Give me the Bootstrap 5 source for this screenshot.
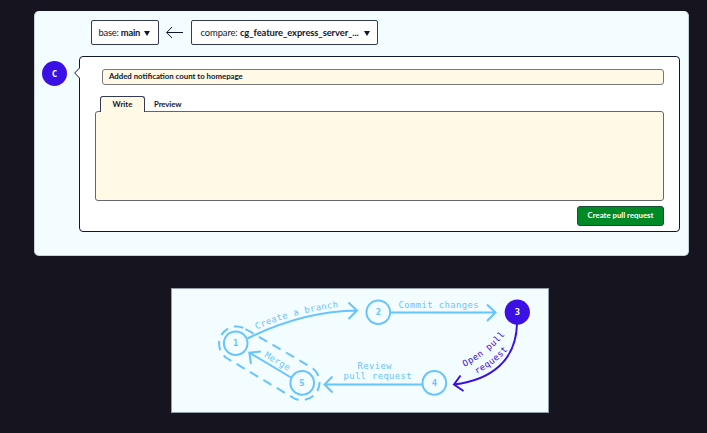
<!DOCTYPE html>
<html lang="en">
<head>
<meta charset="utf-8">
<meta name="viewport" content="width=device-width, initial-scale=1">
<title>Create pull request</title>
<link href="https://cdn.jsdelivr.net/npm/bootstrap@5.3.0/dist/css/bootstrap.min.css" rel="stylesheet">
<style>
:root{--ink:#10162f;--violet:#3a10e5;--cream:#fff9e5;--ice:#f3fcff}
body{background:#15141f;color:var(--ink);font-family:Lato,sans-serif;height:433px;overflow:hidden;padding:11px 18px 0 34px;line-height:1}
.pr-panel{height:245px;background:var(--ice);border:1px solid #c5d0d9;border-top:0;border-radius:5px;padding:9px 8px 0 7px}
.branch-bar{margin-left:49px;height:25px}
.branch-btn{height:25px;background:#fff;border:1px solid #343a54;border-radius:2px;font-size:9.4px;letter-spacing:-.23px;white-space:nowrap;color:var(--ink)}
.branch-btn svg{margin-top:1px}
.base-btn{width:68px;padding:0 8px 0 6.5px}
.compare-btn{width:187px;padding:0 7px 0 8.5px;letter-spacing:-.09px}
.left-arrow{margin:0 8px 0 7px}
.avatar-dot{width:25px;height:25px;background:var(--violet);color:#fff;font:700 9px "DejaVu Sans Mono",monospace;margin-top:5px}
.form-row{margin-top:11px;gap:7px}
.notch{width:6px;height:12px;margin:11px -1px 0 0;z-index:1}
.pr-box{height:175.5px;background:#fff;border:1px solid var(--ink);border-radius:4px;padding:12px 15px 0;font-size:7.8px;font-weight:700}
.title-field{height:16px;margin-left:7px;background:var(--cream);border:1px solid #77777c;border-radius:3px;padding:0 6px}
.tab-row{margin:11px 0 -1px 5px;height:16px}
.tab-on{width:45px;background:var(--cream);border:1px solid #343a54;border-bottom:0;border-radius:3px 3px 0 0;z-index:1}
.tab-off{margin-left:9px;padding-top:1px;letter-spacing:-.1px}
.body-field{height:90px;background:var(--cream);border:1px solid #65656c;border-radius:3px}
.create-btn{width:87px;height:20px;margin-top:5px;background:#008a27;border:1px solid #164c32;border-radius:3px;color:#fff;font-size:7.8px;font-weight:700;white-space:nowrap}
.flow-card{width:378px;height:125px;margin:32px 0 0 137px;background:var(--ice)}
.flow-card text{font-family:"DejaVu Sans Mono","Liberation Mono",monospace;font-size:8.8px}
</style>
</head>
<body>
<main>
<section class="pr-panel">
  <div class="branch-bar d-flex align-items-center">
    <button class="branch-btn base-btn d-flex align-items-center justify-content-between"><span>base: <b>main</b></span><svg width="6" height="5"><path d="M0 0H6L3 5Z" fill="#10162f"/></svg></button>
    <svg class="left-arrow" width="17" height="13" fill="none" stroke="#10162f" stroke-width="1"><path d="M17 6.5H.7M6 1L.7 6.5L6 12"/></svg>
    <button class="branch-btn compare-btn d-flex align-items-center justify-content-between"><span>compare: <b>cg_feature_express_server_...</b></span><svg width="6" height="5"><path d="M0 0H6L3 5Z" fill="#10162f"/></svg></button>
  </div>
  <div class="form-row d-flex align-items-start">
    <div class="avatar-dot rounded-circle d-flex align-items-center justify-content-center flex-shrink-0">C</div>
    <div class="d-flex flex-grow-1 align-items-start">
      <svg class="notch flex-shrink-0" viewBox="0 0 6 12"><path d="M6 .5L.7 6L6 11.5" fill="#fff" stroke="#10162f"/></svg>
      <div class="pr-box flex-grow-1">
        <div class="title-field d-flex align-items-center">Added notification count to homepage</div>
        <div class="tab-row d-flex align-items-stretch">
          <div class="tab-on d-flex align-items-center justify-content-center">Write</div>
          <div class="tab-off d-flex align-items-center">Preview</div>
        </div>
        <div class="body-field"></div>
        <div class="d-flex justify-content-end"><button class="create-btn p-0">Create pull request</button></div>
      </div>
    </div>
  </div>
</section>
<section class="flow-card">
<svg class="d-block" width="378" height="125" viewBox="171 288 378 125" fill="none">
  <rect x="171.5" y="288.5" width="377" height="124" stroke="#929eab"/>
  <defs>
    <path id="p-branch" d="M256.5 329.5Q296 312 339.5 307.3"/>
    <path id="p-open" d="M464.5 367Q489 354 505.5 334"/>
    <path id="p-req" d="M476.5 374Q495 365 509.5 348"/>
  </defs>
  <g stroke="#66c4ff" stroke-width="2">
    <circle cx="235.7" cy="343.2" r="11.8"/><circle cx="378.3" cy="312.2" r="11.8"/>
    <circle cx="434.3" cy="382.9" r="11.8"/><circle cx="302.2" cy="382.9" r="11.8"/>
    <path d="M247.5 338.5Q303 311 357 310.5M348.5 302.5L357 310.5L348.5 319"/>
    <path d="M390 312.5H495.5M487 304.5L495.5 312.5L487 321"/>
    <path d="M422.5 384.5H324.5M332.5 376.5L324.5 384.5L332.5 392.5"/>
    <path d="M291 377.5L249.5 352.7M261 351.5L249.3 352.7L251 364"/>
    <path d="M244.4 328.4L311.9 367.6A17.8 17.8 0 0 1 294.1 398.3L226.6 358A17.3 17.3 0 0 1 244.4 328.4Z" stroke-dasharray="9.4 6.2" stroke-dashoffset="-1.2"/>
  </g>
  <circle cx="517.3" cy="312.2" r="12.6" fill="#3a10e5"/>
  <path d="M517 324C516 360 492 380 454 384.5M460.5 375.5L454 384.5L463.5 391" stroke="#3a10e5" stroke-width="2"/>
  <g fill="#66c4ff">
    <text><textPath href="#p-branch" textLength="85">Create a branch</textPath></text>
    <text x="398.5" y="307.5" textLength="80">Commit changes</text>
    <text x="357.5" y="368.5" textLength="34">Review</text>
    <text x="343.5" y="378.5" textLength="68">pull request</text>
    <text transform="translate(264 356.5) rotate(31)" textLength="28">Merge</text>
    <g font-weight="700" text-anchor="middle"><text x="235.7" y="346.4">1</text><text x="378.3" y="315.4">2</text><text x="434.3" y="386.1">4</text><text x="302" y="386.1">5</text></g>
  </g>
  <g fill="#3a10e5">
    <text><textPath href="#p-open" textLength="52">Open pull</textPath></text>
    <text><textPath href="#p-req" textLength="40">request</textPath></text>
  </g>
  <text x="517.3" y="315.4" fill="#fff" font-weight="700" text-anchor="middle">3</text>
</svg>
</section>
</main>
<script src="https://cdn.jsdelivr.net/npm/bootstrap@5.3.0/dist/js/bootstrap.bundle.min.js"></script>
</body>
</html>
